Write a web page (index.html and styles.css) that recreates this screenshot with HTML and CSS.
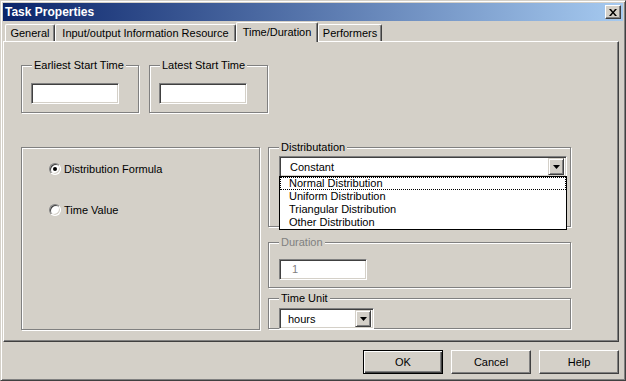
FILE: index.html
```html
<!DOCTYPE html>
<html lang="en">
  <head>
    <meta charset="UTF-8" />
    <meta name="viewport" content="width=device-width, initial-scale=1.0" />
    <title>Task Properties</title>
    <link rel="stylesheet" href="styles.css">
  </head>

  <body>
    <div class="window">
      <div class="titlebar">
        <span class="title">Task Properties</span>
        <button class="close-btn">
          <svg width="8" height="7" viewBox="0 0 8 7">
            <path d="M0 0h2l2 2.5 2-2.5h2l-3 3.5 3 3.5h-2l-2-2.5-2 2.5h-2l3-3.5z" />
          </svg>
        </button>
      </div>

      <div class="tabs">
        <div class="tab tab-general">General</div>
        <div class="tab tab-io">Input/output Information Resource</div>
        <div class="tab tab-time active">Time/Duration</div>
        <div class="tab tab-perf">Performers</div>
      </div>

      <div class="panel">
        <div class="start-row">
          <div class="group start-group">
            <span class="group-label">Earliest Start Time</span>
            <div class="edit start-edit"></div>
          </div>
          <div class="group start-group latest">
            <span class="group-label">Latest Start Time</span>
            <div class="edit start-edit"></div>
          </div>
        </div>

        <div class="main-row">
          <div class="group radio-group">
            <label class="radio-row"><span class="radio checked"></span>Distribution Formula</label>
            <label class="radio-row"><span class="radio"></span>Time Value</label>
          </div>

          <div class="right-col">
            <div class="group dist-group">
              <span class="group-label">Distributation</span>
              <div class="combo combo-wide">
                <span class="combo-text">Constant</span>
                <span class="combo-btn">
                  <svg width="7" height="4" viewBox="0 0 7 4"><path d="M0 0h7L3.5 4z" /></svg>
                </span>
                <ul class="droplist">
                  <li class="focused">Normal Distribution</li>
                  <li>Uniform Distribution</li>
                  <li>Triangular Distribution</li>
                  <li>Other Distribution</li>
                </ul>
              </div>
            </div>

            <div class="group duration-group">
              <span class="group-label disabled">Duration</span>
              <div class="edit duration-edit">1</div>
            </div>

            <div class="group unit-group">
              <span class="group-label">Time Unit</span>
              <div class="combo combo-small">
                <span class="combo-text">hours</span>
                <span class="combo-btn">
                  <svg width="7" height="4" viewBox="0 0 7 4"><path d="M0 0h7L3.5 4z" /></svg>
                </span>
              </div>
            </div>
          </div>
        </div>
      </div>

      <div class="footer">
        <button class="btn default">OK</button>
        <button class="btn">Cancel</button>
        <button class="btn">Help</button>
      </div>
    </div>
  </body>
</html>
```

FILE: styles.css
```css
* {
  box-sizing: border-box;
}

body {
  margin: 0;
  font-family: "Liberation Sans", Arial, sans-serif;
  font-size: 11px;
  color: #000;
  background-color: #d4d0c8;
}

.window {
  display: flex;
  flex-direction: column;
  width: 626px;
  height: 381px;
  padding: 2px;
  background-color: #d4d0c8;
  border: 1px solid;
  border-color: #d4d0c8 #404040 #404040 #d4d0c8;
  box-shadow: inset 1px 1px #fff, inset -1px -1px #808080;
}

/* title bar */
.titlebar {
  display: flex;
  justify-content: space-between;
  align-items: center;
  height: 18px;
  padding: 0 2px 0 2px;
  background: linear-gradient(to right, #0a246a, #a6caf0);
}

.title {
  color: #fff;
  font-weight: bold;
  font-size: 12px;
}

.close-btn {
  display: flex;
  justify-content: center;
  align-items: center;
  width: 16px;
  height: 14px;
  padding: 0;
  background-color: #d4d0c8;
  border: 1px solid;
  border-color: #fff #404040 #404040 #fff;
  box-shadow: inset -1px -1px #808080;
}

/* tabs */
.tabs {
  display: flex;
  align-items: flex-end;
  height: 20px;
  padding-left: 2px;
}

.tab {
  height: 17px;
  padding-top: 2px;
  text-align: center;
  white-space: nowrap;
  border-top: 1px solid #fff;
  border-left: 1px solid #fff;
  border-right: 1px solid #404040;
  border-radius: 2px 2px 0 0;
  box-shadow: inset -1px 0 #808080;
}

.tab-general {
  width: 50px;
}

.tab-io {
  width: 181px;
}

.tab-time {
  width: 82px;
}

.tab-perf {
  width: 64px;
}

.tab.active {
  position: relative;
  z-index: 1;
  height: 20px;
  margin-bottom: -1px;
  padding-top: 3px;
  background-color: #d4d0c8;
}

/* panel */
.panel {
  height: 301px;
  margin-right: 4px;
  padding: 23px 0 0 17px;
  border: 1px solid;
  border-color: #fff #404040 #404040 #fff;
  box-shadow: inset -1px -1px #808080;
}

.group {
  position: relative;
  border: 1px solid #808080;
  box-shadow: 1px 1px #fff, inset 1px 1px #fff;
}

.group-label {
  position: absolute;
  top: -7px;
  left: 10px;
  padding: 0 2px;
  line-height: 13px;
  white-space: nowrap;
  background-color: #d4d0c8;
}

.group-label.disabled {
  color: #808080;
}

.edit {
  width: 88px;
  height: 21px;
  background-color: #fff;
  border: 1px solid;
  border-color: #808080 #fff #fff #808080;
  box-shadow: inset 1px 1px #404040, inset -1px -1px #d4d0c8;
}

.start-row {
  display: flex;
  gap: 10px;
}

.start-group {
  width: 118px;
  height: 48px;
  padding: 17px 0 0 9px;
}

.start-group.latest {
  width: 119px;
}

.main-row {
  display: flex;
  gap: 8px;
  margin-top: 34px;
}

.radio-group {
  width: 239px;
  height: 183px;
  padding: 14px 0 0 27px;
}

.radio-row {
  display: flex;
  align-items: center;
  gap: 3px;
  height: 13px;
  margin-bottom: 28px;
}

.radio {
  position: relative;
  width: 12px;
  height: 12px;
  border: 1px solid;
  border-color: #808080 #fff #fff #808080;
  border-radius: 50%;
  background-color: #fff;
  box-shadow: inset 1px 1px #404040, inset -1px -1px #d4d0c8;
}

.radio.checked::after {
  content: "";
  position: absolute;
  top: 3px;
  left: 3px;
  width: 4px;
  height: 4px;
  border-radius: 50%;
  background-color: #000;
}

.right-col {
  display: flex;
  flex-direction: column;
  width: 303px;
}

.dist-group {
  z-index: 1;
  height: 80px;
  padding: 8px 0 0 10px;
}

.duration-group {
  height: 46px;
  margin-top: 15px;
  padding: 16px 0 0 10px;
}

.unit-group {
  height: 31px;
  margin-top: 10px;
  padding: 9px 0 0 10px;
}

.duration-edit {
  padding: 3px 0 0 12px;
  color: #808080;
}

/* combo boxes */
.combo {
  position: relative;
  display: flex;
  justify-content: space-between;
  align-items: center;
  height: 21px;
  padding: 0 2px 0 10px;
  background-color: #fff;
  border: 1px solid;
  border-color: #808080 #fff #fff #808080;
  box-shadow: inset 1px 1px #404040, inset -1px -1px #d4d0c8;
}

.combo-wide {
  width: 288px;
}

.combo-small {
  width: 95px;
  padding-left: 8px;
}

.combo-btn {
  display: flex;
  justify-content: center;
  align-items: center;
  width: 16px;
  height: 17px;
  background-color: #d4d0c8;
  border: 1px solid;
  border-color: #d4d0c8 #404040 #404040 #d4d0c8;
  box-shadow: inset 1px 1px #fff, inset -1px -1px #808080;
}

.droplist {
  position: absolute;
  top: 19px;
  left: -1px;
  width: 288px;
  margin: 0;
  padding: 0;
  list-style: none;
  background-color: #fff;
  border: 1px solid #000;
}

.droplist li {
  height: 13px;
  padding-left: 9px;
  line-height: 13px;
}

.droplist li.focused {
  outline: 1px dotted #000;
  outline-offset: -1px;
}

/* footer buttons */
.footer {
  display: flex;
  justify-content: flex-end;
  gap: 8px;
  padding: 8px 4px 0 0;
}

.btn {
  width: 80px;
  height: 24px;
  padding: 0;
  font-family: "Liberation Sans", Arial, sans-serif;
  font-size: 11px;
  color: #000;
  background-color: #d4d0c8;
  border: 1px solid;
  border-color: #fff #404040 #404040 #fff;
  box-shadow: inset -1px -1px #808080;
}

.btn.default {
  border-color: #000;
  box-shadow: inset 1px 1px #fff, inset -1px -1px #404040, inset -2px -2px #808080;
}
```
